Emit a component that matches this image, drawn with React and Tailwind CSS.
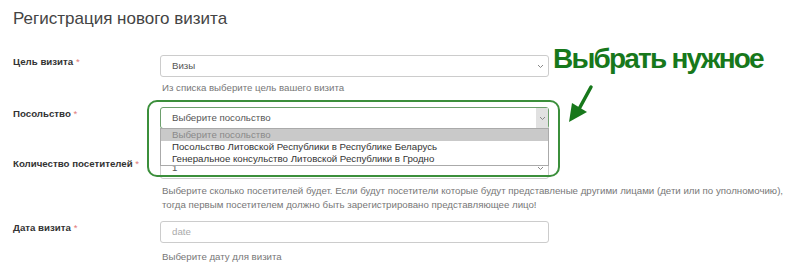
import React from 'react';

const Chevron = () => (
  <svg width="7" height="5" viewBox="0 0 7 5" className="shrink-0">
    <path d="M1 1l2.5 2.5L6 1" fill="none" stroke="#888" strokeWidth="1" />
  </svg>
);

const Label = ({ children }) => (
  <div className="w-[147px] shrink-0 text-[9.7px] leading-[14px] font-bold text-[#333]">
    {children} <span className="text-[#e27b7b] font-normal">*</span>
  </div>
);

const Select = ({ value, focused }) => (
  <div
    className={`h-[22px] flex items-center justify-between rounded-[3px] border text-[9.7px] text-[#555] ${
      focused ? 'border-[#6d9f6d]' : 'border-[#ccc]'
    }`}
  >
    <span className="pl-[11px]">{value}</span>
    {focused ? (
      <span className="h-full w-[12px] bg-[#e1e1e1] flex items-center justify-center">
        <Chevron />
      </span>
    ) : (
      <span className="pr-[4px]">
        <Chevron />
      </span>
    )}
  </div>
);

const Help = ({ children, className = '' }) => (
  <div className={`text-[9.7px] leading-[14px] text-[#777] pl-[2px] whitespace-nowrap ${className}`}>{children}</div>
);

export default function App() {
  const options = [
    'Выберите посольство',
    'Посольство Литовской Республики в Республике Беларусь',
    'Генеральное консульство Литовской Республики в Гродно',
  ];

  return (
    <div className="relative w-[800px] h-[274px] overflow-hidden bg-white font-['Liberation_Sans',Arial,sans-serif]">
      <div className="pl-[13px] pt-[9px]">
        <h1 className="text-[17px] leading-[20px] text-[#444] font-normal">Регистрация нового визита</h1>

        {/* цель визита */}
        <div className="flex mt-[26px]">
          <Label>Цель визита</Label>
          <div className="w-[389px]">
            <Select value="Визы" />
            <Help className="mt-[4px]">Из списка выберите цель вашего визита</Help>
          </div>
        </div>

        {/* посольство */}
        <div className="flex mt-[12px] relative z-10">
          <Label>Посольство</Label>
          <div className="w-[389px] relative">
            <Select value="Выберите посольство" focused />
            <div className="absolute left-0 top-[21px] w-full bg-white border border-[#aaa] text-[9.7px] leading-[12px] text-[#333]">
              {options.map((o, i) => (
                <div key={o} className={`pl-[11px] ${i === 0 ? 'bg-[#c9c9c9] text-[#8a8a8a]' : ''}`}>
                  {o}
                </div>
              ))}
            </div>
          </div>
        </div>

        {/* количество */}
        <div className="flex mt-[28px]">
          <Label>Количество посетителей</Label>
          <div className="w-[389px]">
            <Select value="1" />
            <Help className="mt-[5px]">
              Выберите сколько посетителей будет. Если будут посетители которые будут представленые другими лицами (дети или по уполномочию),
              <br />
              тогда первым посетителем должно быть зарегистрировано представляющее лицо!
            </Help>
          </div>
        </div>

        {/* дата */}
        <div className="flex mt-[9px]">
          <Label>Дата визита</Label>
          <div className="w-[389px]">
            <div className="h-[22px] flex items-center rounded-[3px] border border-[#ccc] text-[9.7px] text-[#aaa] pl-[11px]">
              date
            </div>
            <Help className="mt-[7px]">Выберите дату для визита</Help>
          </div>
        </div>
      </div>

      {/* annotation */}
      <div className="absolute left-[147px] top-[100px] w-[413px] h-[77px] border-2 border-[#3b8f3b] rounded-[10px] z-20 pointer-events-none" />
      <div className="absolute left-[553px] top-[42px] text-[28px] leading-[34px] font-bold text-[#17781b] tracking-[-1.8px] whitespace-nowrap">
        Выбрать нужное
      </div>
      <svg className="absolute left-[560px] top-[84px]" width="36" height="42" viewBox="0 0 36 42">
        <path d="M31 3 L19 25" stroke="#17781b" strokeWidth="3.5" strokeLinecap="round" fill="none" />
        <path d="M9 38 L12 19 L27 28 Z" fill="#17781b" />
      </svg>
    </div>
  );
}
